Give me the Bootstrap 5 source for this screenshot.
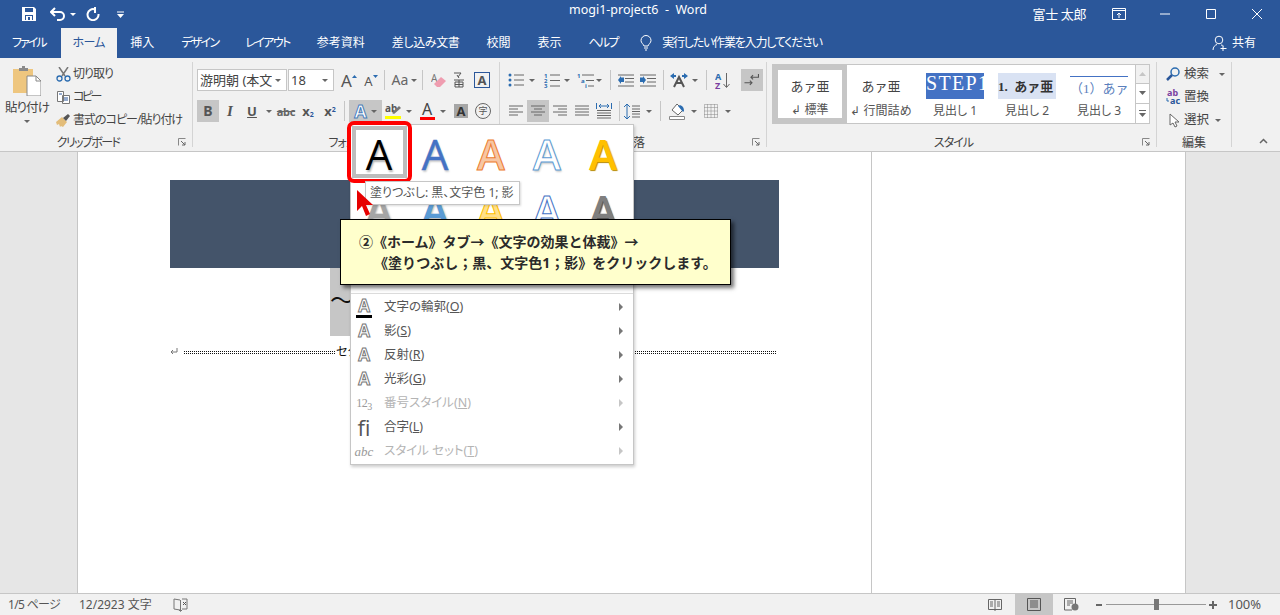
<!DOCTYPE html>
<html lang="ja">
<head>
<meta charset="UTF-8">
<title>mogi1-project6 - Word</title>
<link href="https://cdn.jsdelivr.net/npm/bootstrap@5.3.0/dist/css/bootstrap.min.css" rel="stylesheet">
<style>
    html, body { height: 100%; overflow: hidden; }
    body {
        width: 1280px; height: 615px; background: #e6e6e6; color: #444; position: relative;
        font-family: "Noto Sans", "Noto Sans CJK JP", sans-serif; font-size: 12px;
        font-feature-settings: "palt"; line-height: 1;
    }
    svg { display: block; flex: none; }
    .dn { display: inline-block; width: 0; height: 0; border-top: 3px solid #666; border-left: 3px solid transparent; border-right: 3px solid transparent; }
    /* Meiryo UI kana run narrower than Noto's */
    .sq03 { letter-spacing: -.35px; } .sq07 { letter-spacing: -.7px; } .sq1 { letter-spacing: -1px; } .sq12 { letter-spacing: -1.2px; }
    .sq16 { letter-spacing: -1.6px; } .sq18 { letter-spacing: -1.75px; } .sq2 { letter-spacing: -2px; } .sq25 { letter-spacing: -2.5px; }

    /* title bar + tabs */
    .word-top { background: #2b579a; color: #fff; height: 58px; }
    .title-row { height: 28px; position: relative; }
    .qat { padding-left: 22px; width: 140px; }
    .doc-name { position: absolute; left: 569px; top: 3px; font-size: 12.5px; line-height: 14px; white-space: pre; }
    .acct { margin-left: auto; font-size: 13px; padding-right: 194px; letter-spacing: -.4px; }
    .win-ctl { position: absolute; top: 0; height: 28px; width: 46px; }
    .wc1 { left: 1096px; } .wc2 { left: 1142px; } .wc3 { left: 1188px; } .wc4 { left: 1234px; }
    .tab-row { height: 30px; }
    .rb-tab { height: 30px; padding: 0 13.5px; }
    .rb-tab.first { padding: 0 15px 0 12px; }
    .rb-tab.on { background: #f1f1f1; color: #2b579a; padding: 0 12px; }
    .tell { margin-left: 9px; gap: 10px; }
    .share { margin-left: auto; padding-right: 24px; gap: 5px; }

    /* ribbon */
    .ribbon { height: 94px; background: #f1f1f1; border-bottom: 1px solid #c6c6c6; }
    .rb-group { height: 85px; margin-top: 4px; border-right: 1px solid #d4d4d4; position: relative; }
    .g-clip { width: 193px; } .g-font { width: 307px; } .g-para { width: 267px; } .g-style { width: 390px; } .g-edit { width: 75px; }
    .g-label { position: absolute; left: 0; right: 0; bottom: -3px; text-align: center; color: #444; font-size: 12px; line-height: 14px; }
    .lb-left { padding-right: 16px; }
    .launch { position: absolute; right: 5px; bottom: 0; }
    .paste-btn { width: 54px; padding-top: 4px; }
    .paste-txt { margin-top: 6px; color: #444; font-size: 12.5px; white-space: nowrap; letter-spacing: -.9px; }
    .paste-btn .dn { margin-top: 5px; }
    .clip-list { padding-top: 4px; margin-left: 2px; gap: 7px; }
    .clip-it { height: 16px; gap: 2px; white-space: nowrap; color: #444; }
    .tb-rows { padding-top: 7px; gap: 9px; }
    .tb-row { height: 22px; }
    .font-pad { padding-left: 4px; } .para-pad { padding-left: 5px; }
    .combo { height: 22px; background: #fff; border: 1px solid #c6c6c6; padding: 0 5px 0 2px; color: #444; font-size: 13px; white-space: nowrap; overflow: hidden; }
    .cb-name { width: 90px; margin-right: 1px; } .cb-size { width: 46px; }
    .cb-txt { flex: 1; overflow: hidden; }
    .tb { height: 22px; color: #555; }
    .tb.act { background: #c6c6c6; }
    .w10 { width: 10px; } .w12 { width: 12px; } .w18 { width: 18px; } .w20 { width: 20px; } .w22 { width: 22px; } .w24 { width: 24px; } .w32 { width: 33px; }
    .tb-sep { width: 1px; height: 20px; background: #c6c6c6; }
    .ml1 { margin-left: 1px; } .ml2 { margin-left: 2px; } .ml3 { margin-left: 3px; } .ml4 { margin-left: 4px; } .ml5 { margin-left: 5px; } .ml6 { margin-left: 6px; } .ml7 { margin-left: 7px; }
    .t-b { font-weight: 700; font-size: 14px; color: #555; }
    .t-i { font-family: "Liberation Serif", serif; font-style: italic; font-weight: 700; font-size: 15px; color: #555; }
    .t-u { font-weight: 700; font-size: 13px; text-decoration: underline; color: #555; }
    .t-s { font-size: 11px; font-weight: 700; text-decoration: line-through; color: #666; letter-spacing: -.3px; }
    .t-x { font-size: 13px; font-weight: 700; color: #555; }
    .t-x sub, .t-x sup { font-size: 7px; color: #2b579a; }
    .t-grow { font-size: 17px; color: #555; }
    .t-shrink { font-size: 13px; color: #555; padding-top: 3px; }
    .t-aa { font-size: 14px; color: #666; margin-right: 3px; }
    .sel-a { font-size: 18px; font-weight: 700; color: #fff; -webkit-text-stroke: 1px #4a7ebb; }
    .hl-a { font-size: 16px; color: #444; border-bottom: 3px solid #f00; line-height: 15px; width: 15px; text-align: center; }
    .shade-a { width: 14px; height: 14px; background: #a6a6a6; font-size: 13px; font-weight: 700; color: #333; line-height: 14px; text-align: center; }
    .maru { width: 16px; height: 16px; border: 1px solid #666; border-radius: 50%; font-size: 9px; line-height: 14px; text-align: center; color: #555; }
    .box-a { width: 16px; height: 16px; border: 1px solid #2b579a; font-size: 13px; font-weight: 700; color: #555; line-height: 14px; text-align: center; }

    /* style gallery */
    .st-wrap { padding: 2px 0 0 5px; }
    .st-box { width: 378px; height: 60px; background: #fff; border: 1px solid #c6c6c6; }
    .st-it { height: 58px; }
    .st-first { width: 74px; border: 5px solid #c6c6c6; outline: 1px solid #fff; outline-offset: -6px; }
    .st-any { width: 58px; margin-left: 14px; }
    .st-nine { width: 62px; margin-left: 3px; }
    .st-sample { height: 26px; margin-top: 8px; overflow: hidden; white-space: nowrap; font-size: 13px; font-feature-settings: normal; }
    .st-first .st-sample { margin-top: 3px; }
    .st-name { margin-top: 6px; text-align: center; font-size: 12px; white-space: nowrap; color: #555; }
    .st-first .st-name { margin-top: 5px; }
    .s-min { font-family: "Liberation Serif", "Noto Sans CJK JP", serif; color: #444; }
    .s-h1 { background: #4472c4; color: #fff; font-family: "Liberation Serif", serif; font-size: 20px; letter-spacing: 1.3px; }
    .s-h2 { background: #d9e2f3; color: #333; font-family: "Liberation Serif", "Noto Sans CJK JP", serif; font-weight: 700; font-size: 13px; }
    .s-h3 { border-top: 1px solid #4472c4; color: #5b7fbd; font-family: "Liberation Serif", "Noto Sans CJK JP", serif; font-size: 13px; margin-top: 11px; height: 23px; }
    .st-scroll { margin-left: auto; width: 14px; }
    .st-sc { height: 19.3px; border-left: 1px solid #c6c6c6; border-bottom: 1px solid #c6c6c6; }
    .st-sc:last-child { border-bottom: 0; }
    .st-sc.dim { background: #f1f1f1; }
    .edit-list { padding: 4px 0 0 9px; gap: 7px; }
    .ed-it { height: 16px; font-size: 12.5px; white-space: nowrap; color: #444; }
    .ed-ic { width: 18px; }
    .chev { margin: 80px 0 0 27px; }

    /* document */
    .workspace { height: 441px; }
    .side-pad { width: 77px; background: #e6e6e6; }
    .doc-page { background: #fff; border-left: 1px solid #c6c6c6; height: 441px; }
    .dp1 { width: 794px; padding: 28px 92px 0 92px; }
    .dp2 { border-right: 1px solid #c6c6c6; width: 315px; }
    .dark-band { height: 88px; background: #44546a; }
    .sel-band { margin-left: 160px; width: 40px; height: 68px; background: #c6c6c6; font-size: 24px; color: #111; padding-top: 20px; }
    .sect-row { height: 14px; margin: 9px 2px 0 0; font-size: 12px; color: #111; white-space: nowrap; }
    .sect-dots { flex: 1; height: 3px; border-top: 1px dotted #111; border-bottom: 1px dotted #111; margin: 0 1px; }
    .sect-dots.first { flex: none; width: 151px; margin-left: 6px; }

    /* status bar */
    .status-bar { height: 22px; background: #f1f1f1; border-top: 1px solid #c6c6c6; position: relative; color: #555; font-size: 12px; }
    .stat-l { padding-left: 8px; gap: 19px; }
    .stat-w { width: 75px; }
    .stat-v { position: absolute; top: 0; height: 21px; }
    .sv1 { left: 988px; } .sv2 { left: 1015px; width: 38px; background: #c6c6c6; } .sv3 { left: 1064px; }
    .sv4 { left: 1096px; width: 121px; }
    .sv5 { left: 1228px; font-size: 13px; }
    .zoom-line { width: 100px; height: 1px; background: #999; margin: 0 3px 0 4px; position: relative; }
    .zoom-thumb { position: absolute; left: 48px; top: -5px; width: 5px; height: 11px; background: #777; }

    /* dropdown over the ribbon */
    .fx-menu { position: absolute; left: 350px; top: 124px; width: 284px; height: 341px; background: #fff; border: 1px solid #c6c6c6; box-shadow: 1px 2px 3px rgba(0,0,0,.2); z-index: 5; }
    .fx-gal { display: grid; grid-template-columns: repeat(5, 56px); grid-auto-rows: 56px; height: 169px; border-bottom: 1px solid #dcdcdc; }
    .fx-a { font-family: "Open Sans", sans-serif; font-size: 42px; line-height: 57px; text-align: center; font-weight: 400; }
    .a1 { color: #000; text-shadow: 1px 2px 2px rgba(0,0,0,.3); }
    .a2 { color: #4472c4; -webkit-text-stroke: .5px #4472c4; text-shadow: 1px 2px 2px rgba(0,0,0,.2); }
    .a3 { color: #f7c6a3; -webkit-text-stroke: 1px #ed7d31; font-weight: 600; }
    .a4 { color: #fff; -webkit-text-stroke: 1px #5b9bd5; font-weight: 600; text-shadow: 1px 2px 2px rgba(0,0,0,.2); }
    .a5 { color: #ffc000; font-weight: 600; text-shadow: 1px 1px 1px #b88a00; }
    .a6 { color: #a5a5a5; font-weight: 600; text-shadow: 1px 1px 2px rgba(0,0,0,.3); }
    .a7 { color: #5b9bd5; font-weight: 600; text-shadow: 1px 1px 2px rgba(0,0,0,.3); }
    .a8 { color: #ffe08a; -webkit-text-stroke: 1px #ffc000; font-weight: 600; }
    .a9 { color: #fff; -webkit-text-stroke: 1px #4472c4; font-weight: 600; }
    .a10 { color: #7f7f7f; font-weight: 600; text-shadow: 1px 2px 1px #555; }
    .fx-items { padding-top: 1px; }
    .fx-it { height: 24px; font-size: 12.5px; color: #555; position: relative; }
    .fx-it.off { color: #b4b4b4; }
    .fx-ic { width: 33px; padding-right: 7px; text-align: center; font-size: 18px; position: relative; }
    .ol-a { color: #fff; -webkit-text-stroke: 1px #777; font-family: "Open Sans", sans-serif; font-weight: 700; font-size: 17px; line-height: 18px; }
    .ol-bar { width: 16px; height: 3px; background: #000; margin: 0 auto; }
    .fx-arrow { position: absolute; left: 268px; top: 8px; width: 0; height: 0; border-left: 4px solid #777; border-top: 4px solid transparent; border-bottom: 4px solid transparent; }
    .off .fx-arrow { border-left-color: #c6c6c6; }
    .i-num { font-family: "Liberation Serif", serif; font-size: 12px; color: #999; letter-spacing: -.5px; }
    .i-num sub { font-size: 10px; }
    .i-fi { font-family: "Open Sans", sans-serif; font-size: 22px; color: #555; line-height: 22px; }
    .i-abc { font-family: "Liberation Serif", serif; font-style: italic; font-size: 13px; color: #999; }

    .red-ring { position: absolute; left: 347px; top: 121px; width: 65px; height: 62px; border: 4px solid #f00; border-radius: 7px; z-index: 6; }
    .red-ring::after { content: ""; position: absolute; inset: 1px; border: 4px solid #bdbdbd; }
    .fx-tip { position: absolute; left: 365px; top: 181px; width: 155px; height: 24px; background: #fff; border: 1px solid #c6c6c6; box-shadow: 1px 1px 2px rgba(0,0,0,.15); font-size: 12px; color: #555; line-height: 22px; padding-left: 4px; white-space: nowrap; z-index: 7; }
    .red-arrow { position: absolute; left: 356px; top: 189px; z-index: 8; }
    .call-out { position: absolute; left: 340px; top: 219px; width: 391px; height: 66px; background: #ffc; border: 1px solid #000; box-shadow: 3px 3px 4px rgba(0,0,0,.55); z-index: 9; font-weight: 700; font-size: 14px; color: #2b2b2b; padding: 11px 0 0 18px; line-height: 21px; white-space: nowrap; font-feature-settings: normal; }
    .call-out div + div { padding-left: 15px; }
</style>
</head>
<body>

<svg width="0" height="0" class="position-absolute">
    <symbol id="lines-left" viewBox="0 0 16 14"><path d="M1 2h14M1 5h9M1 8h14M1 11h9" stroke="#666" fill="none"/></symbol>
    <symbol id="lines-center" viewBox="0 0 16 14"><path d="M1 2h14M4 5h8M1 8h14M4 11h8" stroke="#666" fill="none"/></symbol>
    <symbol id="lines-right" viewBox="0 0 16 14"><path d="M1 2h14M6 5h9M1 8h14M6 11h9" stroke="#666" fill="none"/></symbol>
    <symbol id="lines-just" viewBox="0 0 16 14"><path d="M1 2h14M1 5h14M1 8h14M1 11h14" stroke="#666" fill="none"/></symbol>
    <symbol id="launcher" viewBox="0 0 9 9"><path d="M.5.5h7M.5.5v7" stroke="#888" fill="none"/><path d="M3 3l4 4M7 4v3H4" stroke="#666" fill="none"/></symbol>
</svg>

<header class="word-top">
    <div class="title-row d-flex align-items-center">
        <div class="qat d-flex align-items-center">
            <svg width="14" height="14" viewBox="0 0 14 14"><path d="M0 0h12l2 2v12H0z" fill="#fff"/><path d="M3 1h8v4H3zM3 8h8v5H3z" fill="#2b579a"/><path d="M4 9h6v4H4z" fill="#fff"/><path d="M6 10h2v3H6z" fill="#2b579a"/></svg>
            <svg width="17" height="14" viewBox="0 0 17 14" style="margin-left:14px"><path d="M5 1L1 5l4 4" stroke="#fff" stroke-width="2" fill="none"/><path d="M2 5h8a4 4 0 0 1 0 8H7" stroke="#fff" stroke-width="2" fill="none"/></svg>
            <span class="dn ml3" style="border-top-color:#fff"></span>
            <svg width="14" height="14" viewBox="0 0 14 14" style="margin-left:10px"><path d="M9 2.500A5.500 5.500 0 1 0 12.500 7" stroke="#fff" stroke-width="2" fill="none"/><path d="M8 0h2v6H8z" fill="#fff"/></svg>
            <svg width="7" height="7" viewBox="0 0 7 7" style="margin-left:17px"><path d="M0 1h7" stroke="#fff"/><path d="M0 3h7L3.500 7z" fill="#fff"/></svg>
        </div>
        <div class="doc-name">mogi1-project6  -  Word</div>
        <div class="acct">富士 太郎</div>
        <div class="win-ctl wc1 d-flex align-items-center justify-content-center"><svg width="14" height="12" viewBox="0 0 14 12"><path d="M.5.5h13v11H.5zM.5 2.500h13M7 10V5M5 7l2-2 2 2" stroke="#fff" fill="none"/></svg></div>
        <div class="win-ctl wc2 d-flex align-items-center justify-content-center"><svg width="10" height="2" viewBox="0 0 10 2"><path d="M0 1h10" stroke="#fff"/></svg></div>
        <div class="win-ctl wc3 d-flex align-items-center justify-content-center"><svg width="10" height="10" viewBox="0 0 10 10"><path d="M.5.5h9v9h-9z" stroke="#fff" fill="none"/></svg></div>
        <div class="win-ctl wc4 d-flex align-items-center justify-content-center"><svg width="10" height="10" viewBox="0 0 10 10"><path d="M0 0l10 10M10 0L0 10" stroke="#fff" fill="none"/></svg></div>
    </div>
    <nav class="tab-row d-flex align-items-stretch">
        <div class="rb-tab first d-flex align-items-center"><span class="sq2">ファイル</span></div>
        <div class="rb-tab on d-flex align-items-center"><span class="sq07">ホーム</span></div>
        <div class="rb-tab d-flex align-items-center">挿入</div>
        <div class="rb-tab d-flex align-items-center"><span class="sq18">デザイン</span></div>
        <div class="rb-tab d-flex align-items-center"><span class="sq16">レイアウト</span></div>
        <div class="rb-tab d-flex align-items-center">参考資料</div>
        <div class="rb-tab d-flex align-items-center"><span class="sq03">差し込み文書</span></div>
        <div class="rb-tab d-flex align-items-center">校閲</div>
        <div class="rb-tab d-flex align-items-center">表示</div>
        <div class="rb-tab d-flex align-items-center"><span class="sq18">ヘルプ</span></div>
        <div class="tell d-flex align-items-center">
            <svg width="12" height="16" viewBox="0 0 12 16"><path d="M4 11C3.500 9 1 8 1 5.500a5 5 0 0 1 10 0C11 8 8.500 9 8 11zM4 13h4M5 15h2" stroke="#fff" fill="none"/></svg>
            <span class="sq12">実行したい作業を入力してください</span>
        </div>
        <div class="share d-flex align-items-center">
            <svg width="15" height="16" viewBox="0 0 15 16"><circle cx="7" cy="5" r="3.800" stroke="#fff" fill="none"/><path d="M1 15c0-3 2-5 4-5.500M9 10c1 0 2 .5 2.500 1M11 11v5M8.500 13.500h6" stroke="#fff" fill="none"/></svg>
            <span>共有</span>
        </div>
    </nav>
</header>

<section class="ribbon d-flex">
    <div class="rb-group g-clip d-flex">
        <div class="paste-btn d-flex flex-column align-items-center">
            <svg width="28" height="30" viewBox="0 0 28 30"><path d="M0 3h20v24H0z" fill="#eec67f"/><path d="M6 2h3V0h3v2h3v3H6z" fill="#8a8a8a"/><path d="M14 10h9l5 5v15H14z" fill="#fff" stroke="#888"/><path d="M23 10v5h5" fill="none" stroke="#888"/></svg>
            <div class="paste-txt">貼り付け</div>
            <span class="dn"></span>
        </div>
        <div class="clip-list d-flex flex-column">
            <div class="clip-it d-flex align-items-center">
                <svg width="15" height="15" viewBox="0 0 15 15"><path d="M3 0l6 9M12 0L6 9" stroke="#777" stroke-width="1.500" fill="none"/><circle cx="3.500" cy="11.500" r="2.500" stroke="#2b6cb0" stroke-width="1.300" fill="none"/><circle cx="11.500" cy="11.500" r="2.500" stroke="#2b6cb0" stroke-width="1.300" fill="none"/></svg>
                <span class="sq1">切り取り</span>
            </div>
            <div class="clip-it d-flex align-items-center">
                <svg width="15" height="15" viewBox="0 0 15 15"><path d="M1.500 1.500h6v10h-6zM6.500 5.500h7v8h-7z" fill="#fff" stroke="#777"/><path d="M8 8h4M8 10h4M3 4h3" stroke="#2b579a"/></svg>
                <span class="sq25">コピー</span>
            </div>
            <div class="clip-it d-flex align-items-center">
                <svg width="15" height="15" viewBox="0 0 15 15"><path d="M0 9l6-5 5 5-4 5-2-1-1 1-1-3-2 1z" fill="#e3bd7a"/><path d="M7 5l5-4 2 2-4 5z" fill="#555"/></svg>
                <span class="sq1">書式のコピー/貼り付け</span>
            </div>
        </div>
        <div class="g-label lb-left"><span class="sq16">クリップボード</span></div>
        <svg class="launch" width="9" height="9"><use href="#launcher"/></svg>
    </div>

    <div class="rb-group g-font font-pad d-flex flex-column tb-rows">
        <div class="tb-row d-flex align-items-center">
            <div class="combo cb-name d-flex align-items-center"><span class="cb-txt">游明朝 (本文のフォント</span><span class="dn ml3"></span></div>
            <div class="combo cb-size d-flex align-items-center"><span class="cb-txt">18</span><span class="dn"></span></div>
            <div class="tb w22 ml4 d-flex align-items-center justify-content-center"><span class="t-grow">A</span><svg width="5" height="3" viewBox="0 0 5 3" class="mb-2"><path d="M0 3h5L2.500 0z" fill="#2b6cb0"/></svg></div>
            <div class="tb w22 d-flex align-items-center justify-content-center"><span class="t-shrink">A</span><svg width="5" height="3" viewBox="0 0 5 3" class="mb-2"><path d="M0 0h5L2.500 3z" fill="#2b6cb0"/></svg></div>
            <div class="tb-sep ml2"></div>
            <div class="tb w32 ml3 d-flex align-items-center justify-content-center"><span class="t-aa">Aa</span><span class="dn"></span></div>
            <div class="tb-sep ml1"></div>
            <div class="tb w20 ml6 d-flex align-items-center justify-content-center"><svg width="16" height="16" viewBox="0 0 16 16"><text x="0" y="10" font-size="10" fill="#777" font-family="Noto Sans">A</text><path d="M3 12l7-7 5 4-6 6H6z" fill="#ef9db0"/></svg></div>
            <div class="tb w20 d-flex align-items-center justify-content-center"><svg width="12" height="16" viewBox="0 0 12 16"><path d="M1 1h7L5 5M4 3l2 3M1 8h10M2 10h8v5H2zM6 8v7M2 12.500h8" stroke="#555" fill="none"/></svg></div>
            <div class="tb w22 ml2 d-flex align-items-center justify-content-center"><div class="box-a">A</div></div>
        </div>
        <div class="tb-row d-flex align-items-center">
            <div class="tb w22 act d-flex align-items-center justify-content-center"><span class="t-b">B</span></div>
            <div class="tb w22 d-flex align-items-center justify-content-center"><span class="t-i">I</span></div>
            <div class="tb w22 d-flex align-items-center justify-content-center"><span class="t-u">U</span></div>
            <div class="tb w12 d-flex align-items-center justify-content-center"><span class="dn"></span></div>
            <div class="tb w22 d-flex align-items-center justify-content-center"><span class="t-s">abc</span></div>
            <div class="tb w22 d-flex align-items-center justify-content-center"><span class="t-x">x<sub>2</sub></span></div>
            <div class="tb w22 d-flex align-items-center justify-content-center"><span class="t-x">x<sup>2</sup></span></div>
            <div class="tb-sep ml3"></div>
            <div class="tb w32 act ml4 d-flex align-items-center justify-content-center gap-1"><span class="sel-a">A</span><span class="dn"></span></div>
            <div class="tb w20 ml1 d-flex align-items-center justify-content-center"><svg width="17" height="17" viewBox="0 0 17 17"><text x="0" y="9" font-size="10" font-weight="700" fill="#555" font-family="Noto Sans">ab</text><path d="M7 10l7-7 2 2-7 6z" fill="#777"/><path d="M0 13h16v3H0z" fill="#ff0"/></svg></div>
            <div class="tb w12 d-flex align-items-center justify-content-center"><span class="dn"></span></div>
            <div class="tb w20 ml2 d-flex align-items-center justify-content-center"><div class="hl-a">A</div></div>
            <div class="tb w12 d-flex align-items-center justify-content-center"><span class="dn"></span></div>
            <div class="tb w22 ml1 d-flex align-items-center justify-content-center"><div class="shade-a">A</div></div>
            <div class="tb w22 d-flex align-items-center justify-content-center"><div class="maru">字</div></div>
        </div>
        <div class="g-label"><span class="sq1">フォント</span></div>
        <svg class="launch" width="9" height="9"><use href="#launcher"/></svg>
    </div>

    <div class="rb-group g-para para-pad d-flex flex-column tb-rows">
        <div class="tb-row d-flex align-items-center">
            <div class="tb w20 ml1 d-flex align-items-center justify-content-center"><svg width="16" height="14" viewBox="0 0 16 14"><path d="M6 2h10M6 7h10M6 12h10" stroke="#666"/><circle cx="2" cy="2" r="1.500" fill="#2b6cb0"/><circle cx="2" cy="7" r="1.500" fill="#2b6cb0"/><circle cx="2" cy="12" r="1.500" fill="#2b6cb0"/></svg></div>
            <div class="tb w12 d-flex align-items-center justify-content-center"><span class="dn"></span></div>
            <div class="tb w20 ml4 d-flex align-items-center justify-content-center"><svg width="16" height="15" viewBox="0 0 16 15"><path d="M6 2h10M6 7.500h10M6 13h10" stroke="#666"/><g fill="#2b6cb0" font-size="6" font-family="Noto Sans" font-weight="700"><text x="0" y="5">1</text><text x="0" y="10">2</text><text x="0" y="15">3</text></g></svg></div>
            <div class="tb w10 d-flex align-items-center justify-content-center"><span class="dn"></span></div>
            <div class="tb w18 ml4 d-flex align-items-center justify-content-center"><svg width="17" height="15" viewBox="0 0 17 15"><path d="M5 2h12M9 7.500h8M11 13h6" stroke="#666"/><g fill="#2b6cb0" font-size="6" font-family="Noto Sans" font-weight="700"><text x="0" y="5">1</text><text x="4" y="10">a</text><text x="8" y="15">i</text></g></svg></div>
            <div class="tb w10 d-flex align-items-center justify-content-center"><span class="dn"></span></div>
            <div class="tb-sep ml6"></div>
            <div class="tb w22 ml4 d-flex align-items-center justify-content-center"><svg width="16" height="13" viewBox="0 0 16 13"><path d="M0 1h16M7 4.500h9M7 8h9M0 12h16" stroke="#666"/><path d="M6 3.500H3V2L0 6l3 4V8h3z" fill="#2b6cb0"/></svg></div>
            <div class="tb w22 d-flex align-items-center justify-content-center"><svg width="16" height="13" viewBox="0 0 16 13"><path d="M0 1h16M7 4.500h9M7 8h9M0 12h16" stroke="#666"/><path d="M0 3.500h3V2l3 4-3 4V8H0z" fill="#2b6cb0"/></svg></div>
            <div class="tb-sep ml4"></div>
            <div class="tb w22 ml4 d-flex align-items-center justify-content-center"><svg width="18" height="16" viewBox="0 0 18 16"><path d="M4 15L9 5l5 10M6 11h6" stroke="#555" stroke-width="2" fill="none"/><path d="M0 4l4-3v2h2v2H4v2zM18 4l-4-3v2h-2v2h2v2z" fill="#2b6cb0"/></svg></div>
            <div class="tb w10 d-flex align-items-center justify-content-center"><span class="dn"></span></div>
            <div class="tb-sep ml6"></div>
            <div class="tb w22 ml5 d-flex align-items-center justify-content-center"><svg width="16" height="17" viewBox="0 0 16 17"><text x="0" y="8" font-size="9" font-weight="700" fill="#2b6cb0" font-family="Noto Sans">A</text><text x="0" y="17" font-size="9" font-weight="700" fill="#7a3fa0" font-family="Noto Sans">Z</text><path d="M11.500 1v14M8.500 12l3 3.500 3-3.500" stroke="#666" fill="none"/></svg></div>
            <div class="tb w22 act ml7 d-flex align-items-center justify-content-center"><svg width="16" height="14" viewBox="0 0 14 13"><path d="M13 1v3H6M8 2L6 4l2 2M0 9h7M5 7l2 2-2 2" stroke="#555" fill="none"/></svg></div>
        </div>
        <div class="tb-row d-flex align-items-center">
            <div class="tb w22 d-flex align-items-center justify-content-center"><svg width="16" height="14"><use href="#lines-left"/></svg></div>
            <div class="tb w22 act d-flex align-items-center justify-content-center"><svg width="16" height="14"><use href="#lines-center"/></svg></div>
            <div class="tb w22 d-flex align-items-center justify-content-center"><svg width="16" height="14"><use href="#lines-right"/></svg></div>
            <div class="tb w22 d-flex align-items-center justify-content-center"><svg width="16" height="14"><use href="#lines-just"/></svg></div>
            <div class="tb w22 d-flex align-items-center justify-content-center"><svg width="16" height="17" viewBox="0 0 16 17"><path d="M.5 0v6M15.500 0v6M3 3h10M3 3l2-2M3 3l2 2M13 3l-2-2M13 3l-2 2" stroke="#2b6cb0" fill="none"/><path d="M1 7.500h14M1 10h14M1 12.500h14M1 15h14" stroke="#666"/></svg></div>
            <div class="tb-sep ml4"></div>
            <div class="tb w24 d-flex align-items-center justify-content-center"><svg width="16" height="17" viewBox="0 0 16 17"><path d="M3 1v15M0 4l3-3 3 3M0 13l3 3 3-3" stroke="#2b6cb0" fill="none"/><path d="M8 3h8M8 8.500h8M8 14h8M8 6h8M8 11h8" stroke="#666"/></svg></div>
            <div class="tb w10 d-flex align-items-center justify-content-center"><span class="dn"></span></div>
            <div class="tb-sep ml6"></div>
            <div class="tb w24 ml4 d-flex align-items-center justify-content-center"><svg width="16" height="17" viewBox="0 0 16 17"><path d="M8 1l6 6-5 5-6-5z" fill="#fff" stroke="#666"/><path d="M9 3c2-2 6 0 6 5l-1 1z" fill="#2b6cb0"/><path d="M.5 13.500h15v3H.5z" fill="#fff" stroke="#888"/></svg></div>
            <div class="tb w10 d-flex align-items-center justify-content-center"><span class="dn"></span></div>
            <div class="tb w24 d-flex align-items-center justify-content-center"><svg width="14" height="14" viewBox="0 0 14 14"><path d="M.5.500h13v13H.5zM7 .5v13M.5 7h13M3.500.5v13M10.500.5v13M.5 3.500h13M.5 10.500h13" stroke="#888" stroke-dasharray="1 1" fill="none"/></svg></div>
            <div class="tb w10 d-flex align-items-center justify-content-center"><span class="dn"></span></div>
        </div>
        <div class="g-label">段落</div>
        <svg class="launch" width="9" height="9"><use href="#launcher"/></svg>
    </div>

    <div class="rb-group g-style st-wrap">
        <div class="st-box d-flex">
            <div class="st-it st-first">
                <div class="st-sample s-min text-center d-flex align-items-center justify-content-center">あァ亜</div>
                <div class="st-name">↲ 標準</div>
            </div>
            <div class="st-it st-nine">
                <div class="st-sample s-min text-center d-flex align-items-center justify-content-center">あァ亜</div>
                <div class="st-name">↲ 行間詰め</div>
            </div>
            <div class="st-it st-any ml5">
                <div class="st-sample s-h1">STEP1</div>
                <div class="st-name">見出し 1</div>
            </div>
            <div class="st-it st-any">
                <div class="st-sample s-h2 d-flex align-items-center">1.&nbsp;&nbsp;あァ亜</div>
                <div class="st-name">見出し 2</div>
            </div>
            <div class="st-it st-any">
                <div class="st-sample s-h3 d-flex align-items-center">（1）あァ亜</div>
                <div class="st-name">見出し 3</div>
            </div>
            <div class="st-scroll d-flex flex-column">
                <div class="st-sc dim d-flex align-items-center justify-content-center"><svg width="7" height="4" viewBox="0 0 7 4"><path d="M0 4h7L3.500 0z" fill="#c6c6c6"/></svg></div>
                <div class="st-sc d-flex align-items-center justify-content-center"><svg width="7" height="4" viewBox="0 0 7 4"><path d="M0 0h7L3.500 4z" fill="#666"/></svg></div>
                <div class="st-sc d-flex align-items-center justify-content-center"><svg width="7" height="7" viewBox="0 0 7 7"><path d="M0 .5h7" stroke="#666"/><path d="M0 3h7L3.500 7z" fill="#666"/></svg></div>
            </div>
        </div>
        <div class="g-label lb-left"><span class="sq1">スタイル</span></div>
        <svg class="launch" width="9" height="9"><use href="#launcher"/></svg>
    </div>

    <div class="rb-group g-edit">
        <div class="edit-list d-flex flex-column">
            <div class="ed-it d-flex align-items-center"><div class="ed-ic"><svg width="14" height="14" viewBox="0 0 14 14"><circle cx="9" cy="5" r="4" stroke="#2b6cb0" stroke-width="1.500" fill="none"/><path d="M6 8l-5 5" stroke="#2b579a" stroke-width="2.500"/></svg></div><span>検索</span><span class="dn" style="margin-left:10px"></span></div>
            <div class="ed-it d-flex align-items-center"><div class="ed-ic"><svg width="16" height="16" viewBox="0 0 16 16"><text x="1" y="7" font-size="9" font-weight="700" fill="#7a3fa0" font-family="Noto Sans">ab</text><text x="4" y="15" font-size="9" font-weight="700" fill="#2b579a" font-family="Noto Sans">ac</text><path d="M1 9v3h2" stroke="#2b6cb0" fill="none"/></svg></div><span>置換</span></div>
            <div class="ed-it d-flex align-items-center"><div class="ed-ic"><svg class="ml3" width="11" height="15" viewBox="0 0 11 15"><path d="M1 1v11l3-2 2 4 2-1-2-4h4z" fill="#fff" stroke="#666"/></svg></div><span>選択</span><span class="dn" style="margin-left:6px"></span></div>
        </div>
        <div class="g-label">編集</div>
    </div>
    <svg class="chev" width="9" height="6" viewBox="0 0 9 6"><path d="M1 5l3.500-3.500L8 5" stroke="#666" stroke-width="1.500" fill="none"/></svg>
</section>

<main class="workspace d-flex">
    <div class="side-pad"></div>
    <div class="doc-page dp1">
        <div class="dark-band"></div>
        <div class="sel-band">〜</div>
        <div class="sect-row d-flex align-items-center">
            <svg width="8" height="8" viewBox="0 0 8 8"><path d="M7 0v4H1M3 2L1 4l2 2" stroke="#777" fill="none"/></svg>
            <div class="sect-dots first"></div><span>セクション区切り</span><div class="sect-dots"></div>
        </div>
    </div>
    <div class="doc-page dp2"></div>
</main>

<footer class="status-bar d-flex align-items-center">
    <div class="stat-l d-flex align-items-center">
        <span class="sq07">1/5 ページ</span>
        <span class="stat-w">12/2923 文字</span>
        <svg width="15" height="14" viewBox="0 0 15 14"><path d="M7 2L1 1v10l6 1M9 1h5v10H9M7.500 2v11M6 12l1.500 1.500L9 12" stroke="#777" fill="none"/><path d="M10 4l3 3M13 4l-3 3" stroke="#555"/></svg>
    </div>
    <div class="stat-v sv1 d-flex align-items-center"><svg width="14" height="13" viewBox="0 0 14 13"><path d="M.5 1.500h13v10H.5zM7 1v12M2 4h3M2 6h3M2 8h3M9 4h3M9 6h3M9 8h3" stroke="#666" fill="none"/></svg></div>
    <div class="stat-v sv2 d-flex align-items-center justify-content-center"><svg width="14" height="13" viewBox="0 0 14 13"><path d="M.5.500h13v12H.5zM3 3h8M3 5h8M3 7h8M3 9h8" stroke="#555" fill="none"/></svg></div>
    <div class="stat-v sv3 d-flex align-items-center"><svg width="15" height="13" viewBox="0 0 15 13"><path d="M8 12H.5V.500h11V6M3 3h6M3 5h6M3 7h3" stroke="#666" fill="none"/><circle cx="11" cy="9" r="3.500" fill="#777"/></svg></div>
    <div class="stat-v sv4 d-flex align-items-center">
        <svg width="6" height="2" viewBox="0 0 6 2"><path d="M0 1h6" stroke="#666" stroke-width="2"/></svg>
        <div class="zoom-line"><div class="zoom-thumb"></div></div>
        <svg width="8" height="8" viewBox="0 0 8 8"><path d="M0 4h8M4 0v8" stroke="#666" stroke-width="2"/></svg>
    </div>
    <div class="stat-v sv5 d-flex align-items-center">100%</div>
</footer>

<!-- menu and what lies on it -->
<div class="fx-menu">
    <div class="fx-gal">
        <div class="fx-a a1">A</div><div class="fx-a a2">A</div><div class="fx-a a3">A</div><div class="fx-a a4">A</div><div class="fx-a a5">A</div>
        <div class="fx-a a6">A</div><div class="fx-a a7">A</div><div class="fx-a a8">A</div><div class="fx-a a9">A</div><div class="fx-a a10">A</div>
    </div>
    <div class="fx-items">
        <div class="fx-it d-flex align-items-center"><div class="fx-ic"><div class="ol-a">A</div><div class="ol-bar"></div></div><span>文字の輪郭(<u>O</u>)</span><i class="fx-arrow"></i></div>
        <div class="fx-it d-flex align-items-center"><div class="fx-ic"><div class="ol-a">A</div></div><span>影(<u>S</u>)</span><i class="fx-arrow"></i></div>
        <div class="fx-it d-flex align-items-center"><div class="fx-ic"><div class="ol-a">A</div></div><span>反射(<u>R</u>)</span><i class="fx-arrow"></i></div>
        <div class="fx-it d-flex align-items-center"><div class="fx-ic"><div class="ol-a">A</div></div><span>光彩(<u>G</u>)</span><i class="fx-arrow"></i></div>
        <div class="fx-it off d-flex align-items-center"><div class="fx-ic i-num">12<sub>3</sub></div><span>番号スタイル(<u>N</u>)</span><i class="fx-arrow"></i></div>
        <div class="fx-it d-flex align-items-center"><div class="fx-ic i-fi">fi</div><span>合字(<u>L</u>)</span><i class="fx-arrow"></i></div>
        <div class="fx-it off d-flex align-items-center"><div class="fx-ic i-abc">abc</div><span>スタイル セット(<u>T</u>)</span><i class="fx-arrow"></i></div>
    </div>
</div>
<div class="red-ring"></div>
<div class="fx-tip">塗りつぶし: 黒、文字色 1; 影</div>
<svg class="red-arrow" width="17" height="28" viewBox="0 0 17 28"><path d="M1 1v21l5-5 4 10 4-2-4-9h7z" fill="#e60000"/></svg>
<div class="call-out">
    <div>②《ホーム》タブ→《文字の効果と体裁》→</div>
    <div>《塗りつぶし；黒、文字色1；影》をクリックします。</div>
</div>

<script src="https://cdn.jsdelivr.net/npm/bootstrap@5.3.0/dist/js/bootstrap.bundle.min.js"></script>
</body>
</html>
